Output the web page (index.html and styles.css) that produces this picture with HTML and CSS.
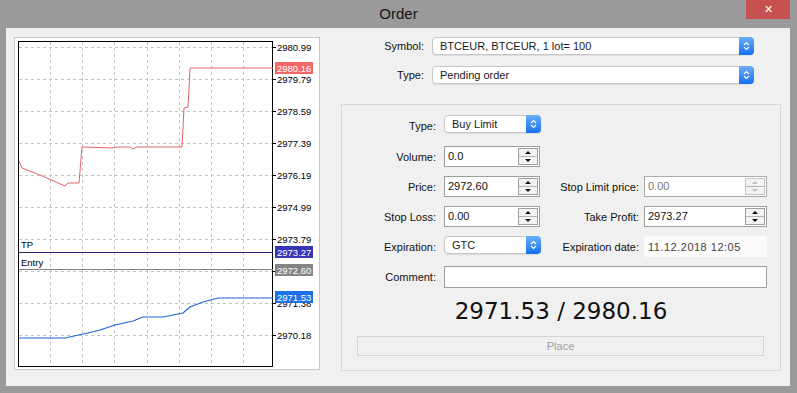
FILE: index.html
```html
<!DOCTYPE html>
<html lang="en">
<head>
    <meta charset="UTF-8">
    <meta name="viewport" content="width=device-width, initial-scale=1.0">
    <title>Order</title>
    <link rel="stylesheet" href="styles.css">
</head>
<body>
    <div class="titlebar">
        <span></span>
        <div class="title">Order</div>
        <button class="close">&#x2715;</button>
    </div>

    <div class="dialog">
        <div class="chart">
            <svg width="304" height="331" viewBox="15 38 304 331">
                <!-- grid -->
                <g stroke="#c4c4c4" stroke-dasharray="3 3" stroke-width="1">
                    <line x1="19" y1="47.5" x2="272" y2="47.5"/>
                    <line x1="19" y1="79.5" x2="272" y2="79.5"/>
                    <line x1="19" y1="111.5" x2="272" y2="111.5"/>
                    <line x1="19" y1="143.5" x2="272" y2="143.5"/>
                    <line x1="19" y1="175.5" x2="272" y2="175.5"/>
                    <line x1="19" y1="207.5" x2="272" y2="207.5"/>
                    <line x1="19" y1="239.5" x2="272" y2="239.5"/>
                    <line x1="19" y1="271.5" x2="272" y2="271.5"/>
                    <line x1="19" y1="303.5" x2="272" y2="303.5"/>
                    <line x1="19" y1="335.5" x2="272" y2="335.5"/>
                    <line x1="50.5" y1="42" x2="50.5" y2="366"/>
                    <line x1="82.5" y1="42" x2="82.5" y2="366"/>
                    <line x1="114.5" y1="42" x2="114.5" y2="366"/>
                    <line x1="147.5" y1="42" x2="147.5" y2="366"/>
                    <line x1="179.5" y1="42" x2="179.5" y2="366"/>
                    <line x1="211.5" y1="42" x2="211.5" y2="366"/>
                    <line x1="243.5" y1="42" x2="243.5" y2="366"/>
                </g>
                <rect x="18.5" y="41.5" width="254" height="325" fill="none" stroke="#000"/>

                <!-- ticks -->
                <g stroke="#000">
                    <line x1="273" y1="47.5" x2="276" y2="47.5"/>
                    <line x1="273" y1="79.5" x2="276" y2="79.5"/>
                    <line x1="273" y1="111.5" x2="276" y2="111.5"/>
                    <line x1="273" y1="143.5" x2="276" y2="143.5"/>
                    <line x1="273" y1="175.5" x2="276" y2="175.5"/>
                    <line x1="273" y1="207.5" x2="276" y2="207.5"/>
                    <line x1="273" y1="239.5" x2="276" y2="239.5"/>
                    <line x1="273" y1="271.5" x2="276" y2="271.5"/>
                    <line x1="273" y1="303.5" x2="276" y2="303.5"/>
                    <line x1="273" y1="335.5" x2="276" y2="335.5"/>
                </g>
                <g class="axis">
                    <text x="277" y="51">2980.99</text>
                    <text x="277" y="83">2979.79</text>
                    <text x="277" y="115">2978.59</text>
                    <text x="277" y="147">2977.39</text>
                    <text x="277" y="179">2976.19</text>
                    <text x="277" y="211">2974.99</text>
                    <text x="277" y="243">2973.79</text>
                    <text x="277" y="275">2972.59</text>
                    <text x="277" y="307">2971.38</text>
                    <text x="277" y="339">2970.18</text>
                </g>

                <!-- levels -->
                <line x1="19" y1="252.5" x2="273" y2="252.5" stroke="#23236f"/>
                <line x1="19" y1="269.5" x2="273" y2="269.5" stroke="#808080"/>
                <text class="level" x="21" y="248">TP</text>
                <text class="level" x="21" y="266">Entry</text>

                <!-- prices -->
                <polyline fill="none" stroke="#e26464" stroke-width="1"
                    points="19,161 22,168 40,175 65,186 68,183 79,183 82,147 113,148 117,147 130,147 133,149 137,147 182,147 184,108 188,107 190,68 273,68"/>
                <polyline fill="none" stroke="#1d63d6" stroke-width="1.2"
                    points="19,338 65,338 88,333 100,330 115,325 133,321 143,317 163,317 173,315 183,313 190,307 203,302 218,298 273,298"/>

                <!-- price tags -->
                <rect x="275" y="62" width="38" height="12" fill="#f06868"/>
                <text class="tag" x="277" y="71.5">2980.16</text>
                <rect x="275" y="246" width="38" height="12" fill="#3535b5"/>
                <text class="tag" x="277" y="255.5">2973.27</text>
                <rect x="275" y="264" width="38" height="12" fill="#858585"/>
                <text class="tag" x="277" y="273.5">2972.60</text>
                <rect x="275" y="291" width="38" height="12" fill="#1a72e8"/>
                <text class="tag" x="277" y="300.5">2971.53</text>
            </svg>
        </div>

        <div class="form">
            <div class="top-row">
                <label class="top-label">Symbol:</label>
                <div class="select symbol">
                    <span class="select-text">BTCEUR, BTCEUR, 1 lot= 100</span>
                    <span class="select-arrow"><svg width="7" height="10" viewBox="0 0 7 10"><path d="M1 4 L3.5 1.5 L6 4 M1 6 L3.5 8.5 L6 6" fill="none" stroke="#fff" stroke-width="1.2"/></svg></span>
                </div>
            </div>
            <div class="top-row second">
                <label class="top-label">Type:</label>
                <div class="select symbol">
                    <span class="select-text">Pending order</span>
                    <span class="select-arrow"><svg width="7" height="10" viewBox="0 0 7 10"><path d="M1 4 L3.5 1.5 L6 4 M1 6 L3.5 8.5 L6 6" fill="none" stroke="#fff" stroke-width="1.2"/></svg></span>
                </div>
            </div>

            <div class="group">
                <div class="grid">
                    <label class="lbl left">Type:</label>
                    <div class="select small">
                        <span class="select-text">Buy Limit</span>
                        <span class="select-arrow"><svg width="7" height="10" viewBox="0 0 7 10"><path d="M1 4 L3.5 1.5 L6 4 M1 6 L3.5 8.5 L6 6" fill="none" stroke="#fff" stroke-width="1.2"/></svg></span>
                    </div>

                    <label class="lbl left">Volume:</label>
                    <div class="spin">
                        <span class="val">0.0</span>
                        <span class="spin-btn"><i class="up"></i><i class="down"></i></span>
                    </div>

                    <label class="lbl left">Price:</label>
                    <div class="spin">
                        <span class="val">2972.60</span>
                        <span class="spin-btn"><i class="up"></i><i class="down"></i></span>
                    </div>
                    <label class="lbl right">Stop Limit price:</label>
                    <div class="spin disabled">
                        <span class="val">0.00</span>
                        <span class="spin-btn"><i class="up"></i><i class="down"></i></span>
                    </div>

                    <label class="lbl left">Stop Loss:</label>
                    <div class="spin">
                        <span class="val">0.00</span>
                        <span class="spin-btn"><i class="up"></i><i class="down"></i></span>
                    </div>
                    <label class="lbl right">Take Profit:</label>
                    <div class="spin">
                        <span class="val">2973.27</span>
                        <span class="spin-btn"><i class="up"></i><i class="down"></i></span>
                    </div>

                    <label class="lbl left">Expiration:</label>
                    <div class="select small top">
                        <span class="select-text">GTC</span>
                        <span class="select-arrow"><svg width="7" height="10" viewBox="0 0 7 10"><path d="M1 4 L3.5 1.5 L6 4 M1 6 L3.5 8.5 L6 6" fill="none" stroke="#fff" stroke-width="1.2"/></svg></span>
                    </div>
                    <label class="lbl right">Expiration date:</label>
                    <div class="date">11.12.2018 12:05</div>

                    <label class="lbl left">Comment:</label>
                    <div class="comment"></div>
                </div>

                <div class="prices">2971.53 / 2980.16</div>
                <button class="place">Place</button>
            </div>
        </div>
    </div>
</body>
</html>
```

FILE: styles.css
```css
body {
    margin: 0;
    height: 393px;
    overflow: hidden;
    background-color: #9a9a9a;
    font-family: "Liberation Sans", Arial, sans-serif;
    font-size: 11px;
    color: #111;
}

.titlebar {
    height: 28px;
    display: grid;
    grid-template-columns: 1fr auto 1fr;
    align-items: center;
}

.title {
    font-size: 15px;
    color: #141414;
    padding-bottom: 1px;
}

.close {
    justify-self: end;
    align-self: start;
    margin-right: 7px;
    width: 44px;
    height: 19px;
    border: none;
    background-color: #c75050;
    color: #fff;
    font-size: 11px;
    padding: 0;
}

.dialog {
    margin: 0 7px 0 6px;
    height: 358px;
    box-sizing: border-box;
    background-color: #f0f0f0;
    padding: 9px 9px 0 8px;
    display: flex;
    align-items: flex-start;
}

.chart {
    width: 304px;
    height: 331px;
    background-color: #fff;
    border: 1px solid #c8c8c8;
}

.chart svg {
    display: block;
}

.axis text {
    font-family: "Liberation Sans", Arial, sans-serif;
    font-size: 9.5px;
    fill: #000;
}

.level {
    font-family: "Liberation Sans", Arial, sans-serif;
    font-size: 9.5px;
    fill: #000;
}

.tag {
    font-family: "Liberation Sans", Arial, sans-serif;
    font-size: 9.5px;
    fill: #fff;
}

.form {
    margin-left: 21px;
    width: 440px;
}

.top-row {
    display: flex;
    align-items: center;
}

.top-row.second {
    margin-top: 11px;
}

.top-label {
    width: 83px;
    margin-right: 8px;
    text-align: right;
}

/* mac style popup */
.select {
    height: 18px;
    box-sizing: border-box;
    display: flex;
    align-items: center;
    background-color: #fff;
    border: 1px solid #c6c6c6;
    border-radius: 4px;
    box-shadow: 0 1px 1px rgba(0, 0, 0, 0.08);
}

.select.symbol {
    width: 322px;
}

.select.small {
    width: 97px;
}

.select.top {
    align-self: start;
}

.select-text {
    flex: 1;
    padding-left: 7px;
    color: #1a1a1a;
}

.select-arrow {
    width: 15px;
    height: 18px;
    margin: -1px -1px -1px 0;
    border-radius: 0 4px 4px 0;
    background: linear-gradient(#6aaefa, #1470ef);
    display: flex;
    justify-content: center;
    align-items: center;
}

.group {
    margin-top: 20px;
    height: 267px;
    box-sizing: border-box;
    border: 1px solid #d9d9d9;
    padding-top: 10px;
}

.grid {
    display: grid;
    grid-template-columns: 102px 96px 104px 123px;
    grid-template-rows: 22px 21px 21px 21px 21px 22px;
    row-gap: 9px;
    align-items: center;
}

.lbl {
    text-align: right;
}

.lbl.left {
    grid-column: 1;
    padding-right: 8px;
}

.lbl.right {
    grid-column: 3;
    padding-right: 5px;
}

.grid .select.small:first-of-type {
    align-self: start;
}

.spin {
    height: 21px;
    box-sizing: border-box;
    border: 1px solid #9e9e9e;
    background-color: #fff;
    display: flex;
    align-items: flex-start;
    padding: 1px 1px 0 3px;
}

.spin .val {
    flex: 1;
    line-height: 17px;
}

.spin-btn {
    width: 18px;
    height: 15px;
    border: 1px solid #a0a0a0;
    background-color: #f3f3f3;
    display: flex;
    flex-direction: column;
}

.spin-btn i {
    flex: 1;
    display: flex;
    justify-content: center;
    align-items: center;
}

.spin-btn i.up {
    border-bottom: 1px solid #b4b4b4;
}

.spin-btn i::after {
    content: "";
    border-left: 3px solid transparent;
    border-right: 3px solid transparent;
}

.spin-btn i.up::after {
    border-bottom: 3px solid #111;
}

.spin-btn i.down::after {
    border-top: 3px solid #111;
}

.spin.disabled {
    border-color: #ababab;
}

.spin.disabled .val {
    color: #7a7a7a;
}

.spin.disabled .spin-btn {
    border-color: #c6c6c6;
}

.spin.disabled .spin-btn i.up::after {
    border-bottom-color: #c0c0c0;
}

.spin.disabled .spin-btn i.down::after {
    border-top-color: #c0c0c0;
}

.date {
    align-self: stretch;
    background-color: #fbfbfb;
    color: #444;
    letter-spacing: 0.5px;
    padding-left: 4px;
    line-height: 23px;
}

.comment {
    grid-column: 2 / span 3;
    height: 22px;
    box-sizing: border-box;
    border: 1px solid #9e9e9e;
    background-color: #fff;
}

.prices {
    margin-top: 9px;
    font-family: "DejaVu Sans", Verdana, sans-serif;
    font-size: 23px;
    line-height: 28px;
    text-align: center;
    color: #111;
}

.place {
    display: block;
    margin: 11px 16px 0 15px;
    width: 407px;
    height: 20px;
    border: 1px solid #d4d4d4;
    background-color: #f0f0f0;
    color: #a0a0a0;
    font-family: "Liberation Sans", Arial, sans-serif;
    font-size: 11px;
}
```
